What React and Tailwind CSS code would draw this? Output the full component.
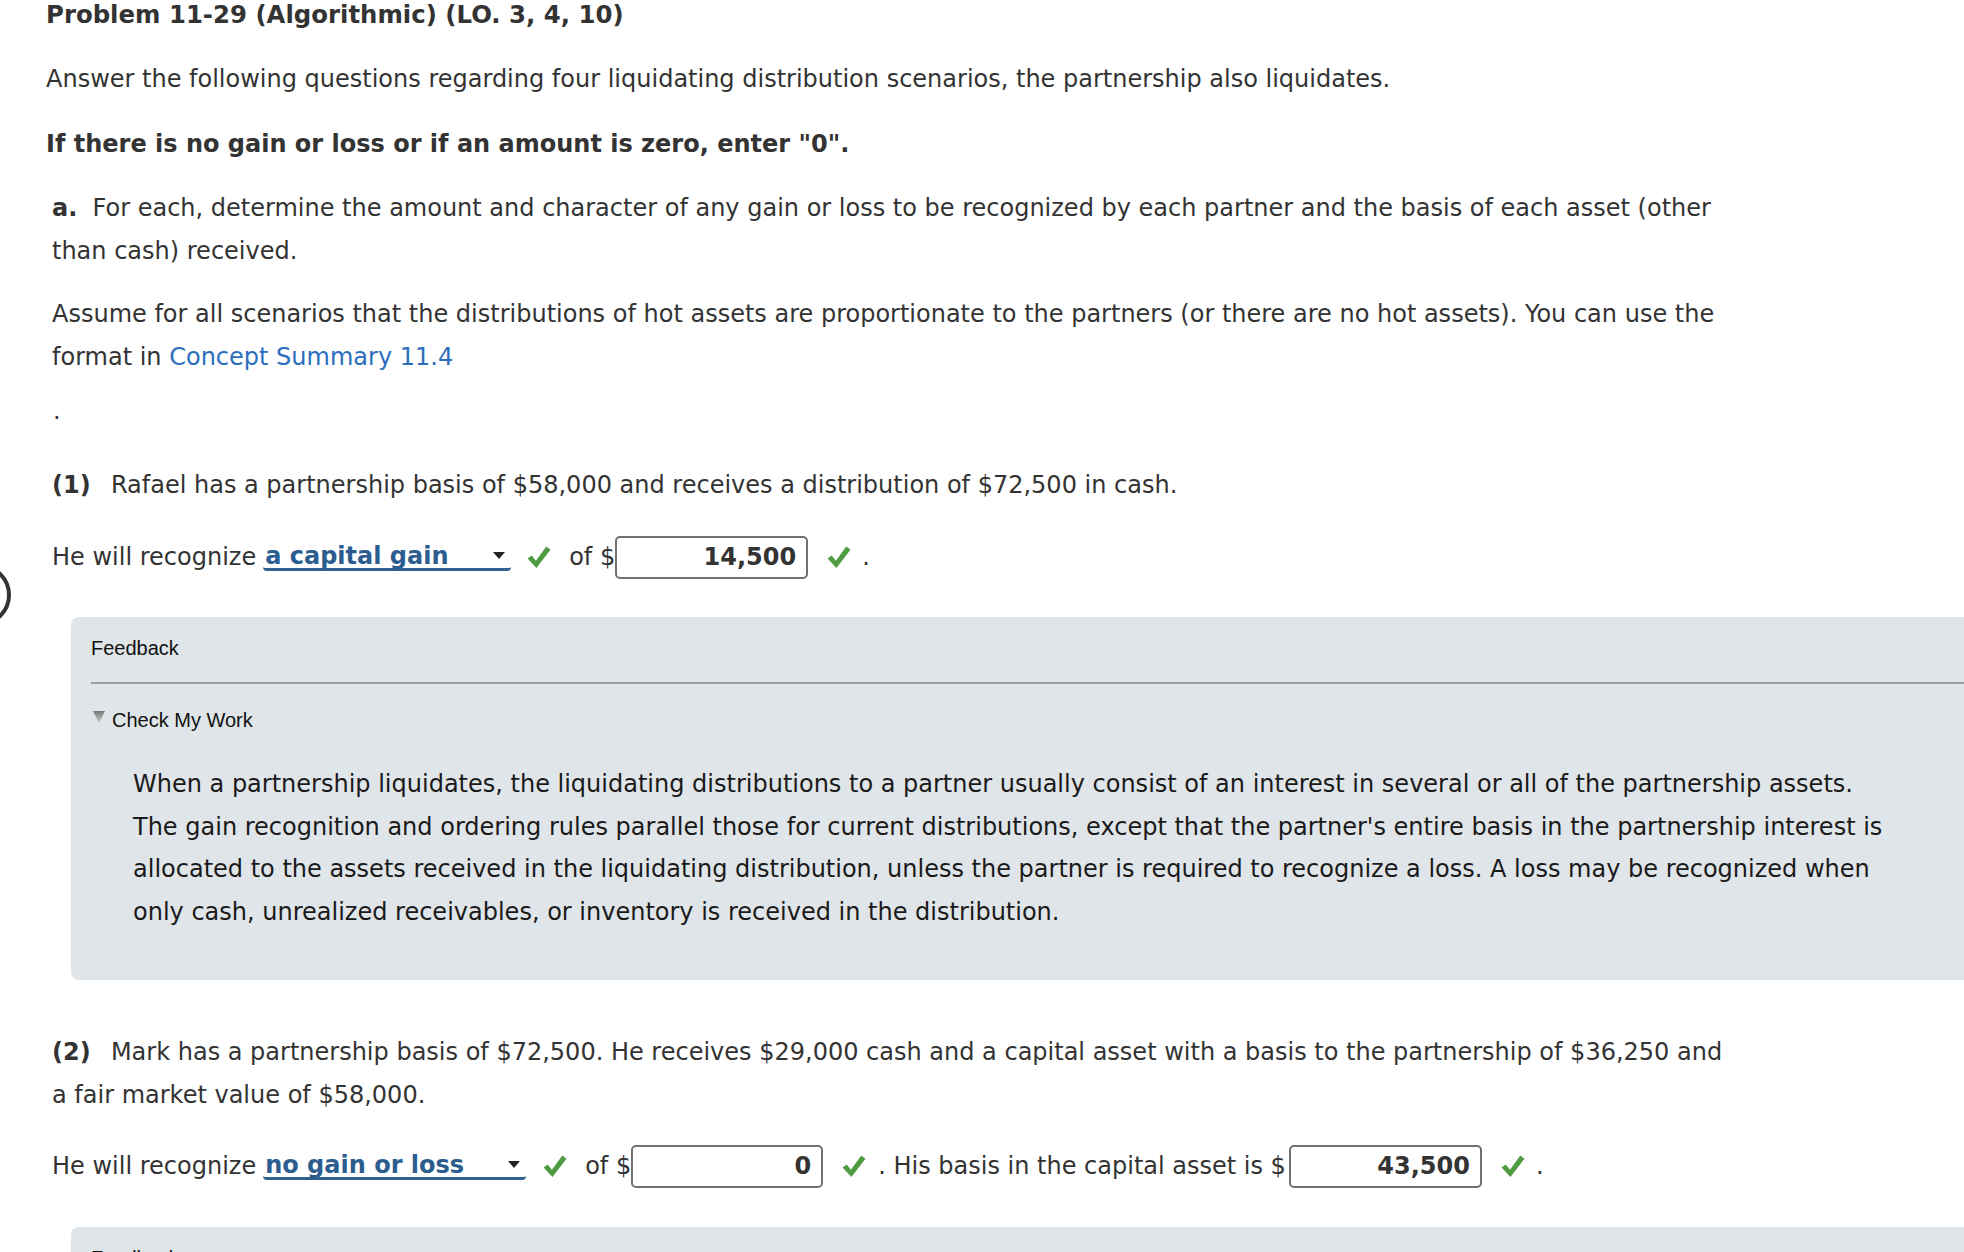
import React from 'react';

// green tick shown after a graded answer
const Tick = () => (
  <svg width="25" height="25" viewBox="0 0 24 24" className="shrink-0">
    <path d="M1.5 13 L5.5 10 L9.5 15 L19.5 1.5 L23.5 4.5 L10 22 Z" fill="#4f9b41" />
  </svg>
);

const Select = ({ value, width }) => (
  <div
    className="relative flex items-center h-[27px] bg-white rounded-[4px] border-b-[3px] border-[#2f6090] pl-[2px]"
    style={{ width }}
  >
    <span className="font-bold text-[#2c5d8f] leading-[22px]">{value}</span>
    <svg width="12" height="8" viewBox="0 0 12 8" className="absolute right-[6px] top-[8px]">
      <path d="M0 0 L12 0 L6 7 Z" fill="#222" />
    </svg>
  </div>
);

const Amount = ({ value, width = 193 }) => (
  <div
    className="flex items-center justify-end h-[43px] bg-white border-2 border-[#707070] rounded-[5px] pr-[10px] font-bold text-[#333]"
    style={{ width }}
  >
    {value}
  </div>
);

const Feedback = ({ children, height }) => (
  <div className="ml-[71px] bg-[#dfe5e8] rounded-l-[8px] overflow-hidden" style={{ height }}>
    <div className="font-['Liberation_Sans',Arial,sans-serif] text-[20px] text-[#111]">
      <div className="pt-[19px] pl-[20px] leading-[24px]">Feedback</div>
      <div className="mt-[22px] ml-[20px] h-[2px] bg-[#9a9da0]" />
      <div className="mt-[24px] pl-[22px] flex items-center leading-[24px]">
        <svg width="12" height="12" viewBox="0 0 12 12" className="mr-[7px] -mt-[6px]">
          <defs>
            <linearGradient id="tri" x1="0" y1="0" x2="0" y2="1">
              <stop offset="0" stopColor="#777" />
              <stop offset="1" stopColor="#c5c9cc" />
            </linearGradient>
          </defs>
          <path d="M0 0 L12 0 L6 12 Z" fill="url(#tri)" />
        </svg>
        Check My Work
      </div>
    </div>
    {children}
  </div>
);

export default function App() {
  return (
    <div className="relative h-[1252px] bg-white overflow-hidden font-['DejaVu_Sans',Verdana,sans-serif] text-[24px] text-[#333]">
      {/* partly hidden round button on the left edge */}
      <svg width="14" height="64" viewBox="0 0 14 64" className="absolute left-0 top-[563px]">
        <circle cx="-20" cy="32" r="29" fill="none" stroke="#333" strokeWidth="4" />
      </svg>

      <h1 className="pl-[46px] font-bold leading-[30px] text-[24.4px]">Problem 11-29 (Algorithmic) (LO. 3, 4, 10)</h1>

      <p className="mt-[28px] pl-[46px] leading-[42.5px]">
        Answer the following questions regarding four liquidating distribution scenarios, the partnership also liquidates.
      </p>

      <p className="mt-[22px] pl-[46px] leading-[42.5px] font-bold">If there is no gain or loss or if an amount is zero, enter "0".</p>

      <p className="mt-[22px] pl-[52px] leading-[42.5px] whitespace-nowrap">
        <span className="font-bold">a.</span>&nbsp; For each, determine the amount and character of any gain or loss to be recognized by each partner and the basis of each asset (other
        <br />
        than cash) received.
      </p>

      <p className="mt-[21px] pl-[52px] leading-[42.5px] whitespace-nowrap">
        Assume for all scenarios that the distributions of hot assets are proportionate to the partners (or there are no hot assets). You can use the
        <br />
        format in <span className="text-[#2a6ebd]">Concept Summary 11.4</span>
      </p>

      <p className="mt-[12px] pl-[53px] leading-[42.5px]">.</p>

      <p className="mt-[31px] pl-[52px] leading-[42.5px]">
        <span className="font-bold mr-[5px]">(1)</span>&nbsp; Rafael has a partnership basis of $58,000 and receives a distribution of $72,500 in cash.
      </p>

      <div className="mt-[30px] h-[42px] pl-[52px] flex items-center whitespace-nowrap">
        <span className="mr-[7px]">He will recognize</span>
        <Select value="a capital gain" width={248} />
        <span className="ml-[15px]"><Tick /></span>
        <span className="ml-[18px]">of $</span>
        <Amount value="14,500" width={193} />
        <span className="ml-[18px]"><Tick /></span>
        <span className="ml-[11px]">.</span>
      </div>

      <div className="mt-[39px]">
        <Feedback height={363}>
          <div className="mt-[31px] pl-[62px] leading-[42.5px] text-[#1a1a1a] whitespace-nowrap">
            When a partnership liquidates, the liquidating distributions to a partner usually consist of an interest in several or all of the partnership assets.
            <br />
            The gain recognition and ordering rules parallel those for current distributions, except that the partner's entire basis in the partnership interest is
            <br />
            allocated to the assets received in the liquidating distribution, unless the partner is required to recognize a loss. A loss may be recognized when
            <br />
            only cash, unrealized receivables, or inventory is received in the distribution.
          </div>
        </Feedback>
      </div>

      <p className="mt-[51px] pl-[52px] leading-[42.5px] whitespace-nowrap">
        <span className="font-bold mr-[5px]">(2)</span>&nbsp; Mark has a partnership basis of $72,500. He receives $29,000 cash and a capital asset with a basis to the partnership of $36,250 and
        <br />
        a fair market value of $58,000.
      </p>

      <div className="mt-[29px] h-[42px] pl-[52px] flex items-center whitespace-nowrap">
        <span className="mr-[7px]">He will recognize</span>
        <Select value="no gain or loss" width={263} />
        <span className="ml-[16px]"><Tick /></span>
        <span className="ml-[18px]">of $</span>
        <Amount value="0" width={192} />
        <span className="ml-[18px]"><Tick /></span>
        <span className="ml-[12px] mr-[3px]">. His basis in the capital asset is $</span>
        <Amount value="43,500" width={193} />
        <span className="ml-[18px]"><Tick /></span>
        <span className="ml-[11px]">.</span>
      </div>

      <div className="mt-[40px]">
        <Feedback height={120} />
      </div>
    </div>
  );
}
